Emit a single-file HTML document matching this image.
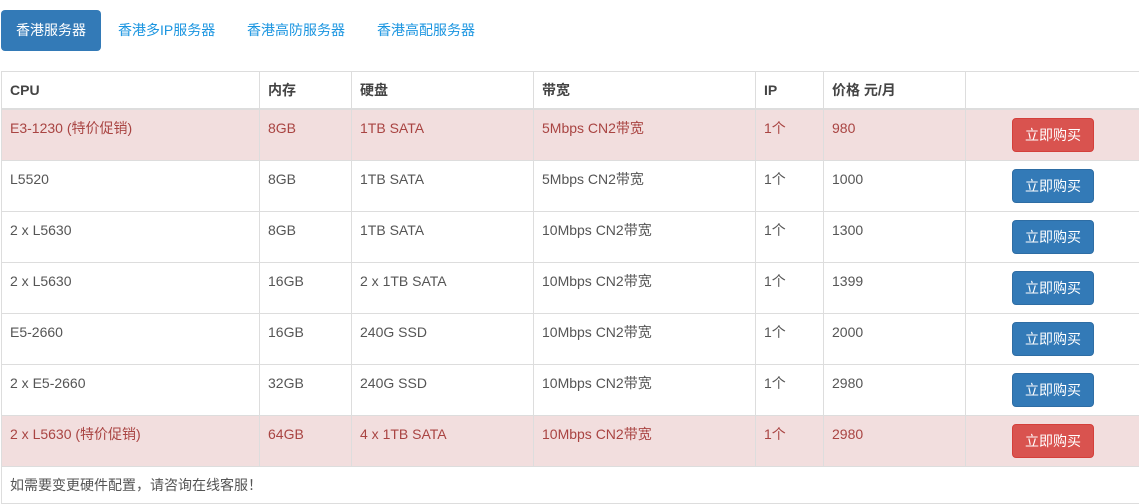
<!DOCTYPE html>
<html><head><meta charset="utf-8"><style>
body{margin:0;background:#fff;font-family:"Liberation Sans","Noto Sans CJK SC",sans-serif;font-size:14px;color:#555;width:1139px;height:504px;overflow:hidden;position:relative}
.nav{position:absolute;top:10px;left:1px;height:41px}
.nav a{position:absolute;top:0;height:41px;line-height:41px;font-size:14px;color:#1b95e0;text-decoration:none;white-space:nowrap}
.nav a.act{background:#337ab7;color:#fff;border-radius:4px;width:100px;text-align:center}
table{position:absolute;top:71px;left:1px;width:1139px;border-collapse:collapse;table-layout:fixed}
td,th{border:1px solid #ddd;padding:8px 8px;line-height:20px;vertical-align:top;text-align:left;white-space:nowrap}
th{font-weight:bold;border-bottom:2px solid #ddd;height:18px;padding-top:8px;color:#444}
td{height:34px}
tr.d td{background:#f2dede;color:#a94442}
.b{display:block;margin-left:38px;width:82px;height:34px;line-height:32px;text-align:center;color:#fff;background:#337ab7;border:1px solid #2e6da4;border-radius:4px;box-sizing:border-box;font-size:14px}
tr.d .b{background:#d9534f;border-color:#d43f3a;color:#fff}
td.btn{padding-top:8px;padding-bottom:8px}
td.f{height:20px;padding:8px}
</style></head><body>
<div class="nav">
<a class="act" style="left:0">香港服务器</a>
<a style="left:117px">香港多IP服务器</a>
<a style="left:246px">香港高防服务器</a>
<a style="left:376px">香港高配服务器</a>
</div>
<table>
<colgroup><col style="width:258px"><col style="width:92px"><col style="width:182px"><col style="width:222px"><col style="width:68px"><col style="width:142px"><col></colgroup>
<tr><th>CPU</th><th>内存</th><th>硬盘</th><th>带宽</th><th>IP</th><th>价格 元/月</th><th></th></tr>
<tr class="d"><td>E3-1230 (特价促销)</td><td>8GB</td><td>1TB SATA</td><td>5Mbps CN2带宽</td><td>1个</td><td>980</td><td class="btn"><span class="b">立即购买</span></td></tr>
<tr><td>L5520</td><td>8GB</td><td>1TB SATA</td><td>5Mbps CN2带宽</td><td>1个</td><td>1000</td><td class="btn"><span class="b">立即购买</span></td></tr>
<tr><td>2 x L5630</td><td>8GB</td><td>1TB SATA</td><td>10Mbps CN2带宽</td><td>1个</td><td>1300</td><td class="btn"><span class="b">立即购买</span></td></tr>
<tr><td>2 x L5630</td><td>16GB</td><td>2 x 1TB SATA</td><td>10Mbps CN2带宽</td><td>1个</td><td>1399</td><td class="btn"><span class="b">立即购买</span></td></tr>
<tr><td>E5-2660</td><td>16GB</td><td>240G SSD</td><td>10Mbps CN2带宽</td><td>1个</td><td>2000</td><td class="btn"><span class="b">立即购买</span></td></tr>
<tr><td>2 x E5-2660</td><td>32GB</td><td>240G SSD</td><td>10Mbps CN2带宽</td><td>1个</td><td>2980</td><td class="btn"><span class="b">立即购买</span></td></tr>
<tr class="d"><td>2 x L5630 (特价促销)</td><td>64GB</td><td>4 x 1TB SATA</td><td>10Mbps CN2带宽</td><td>1个</td><td>2980</td><td class="btn"><span class="b">立即购买</span></td></tr>
<tr><td class="f" colspan="7">如需要变更硬件配置，请咨询在线客服！</td></tr>
</table>
</body></html>
